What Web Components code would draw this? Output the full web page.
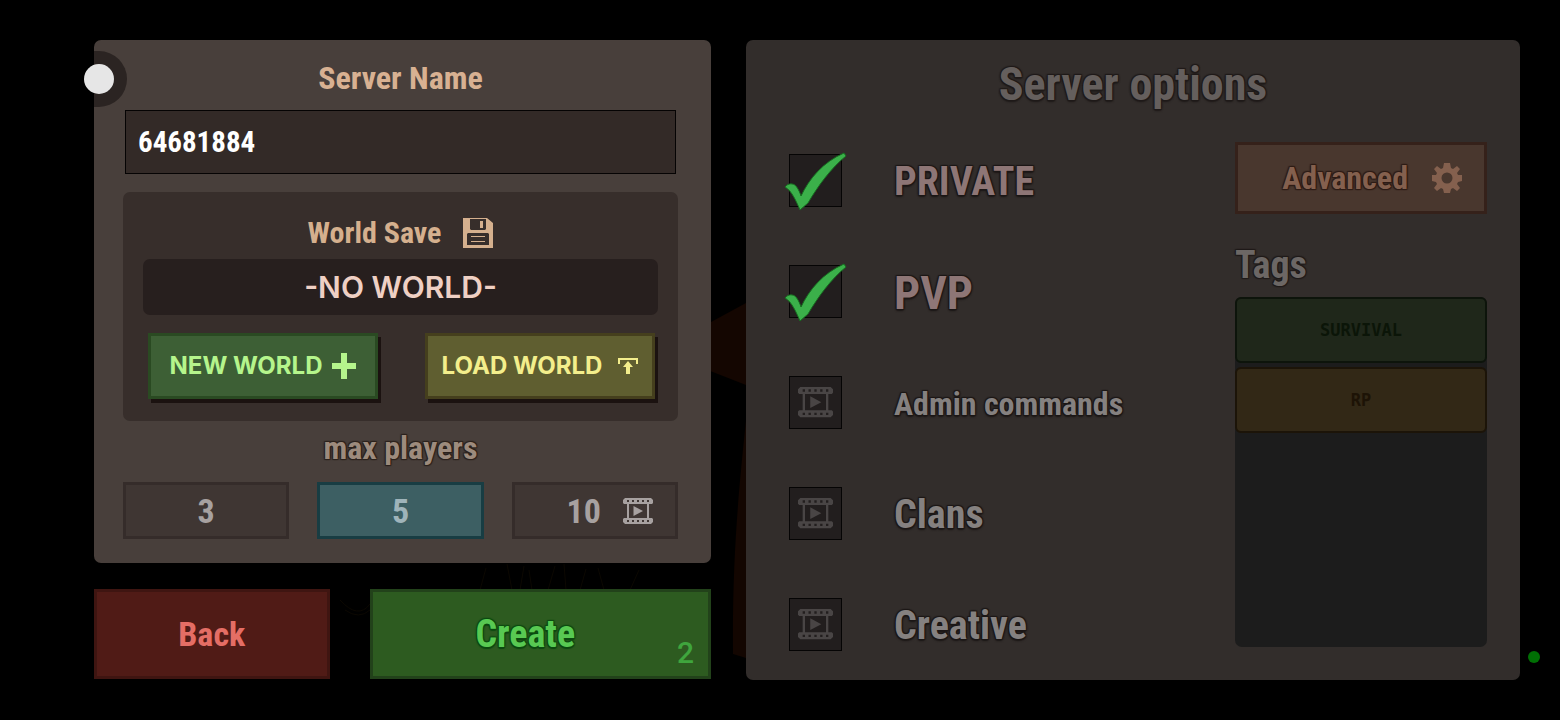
<!DOCTYPE html>
<html lang="en">
<head>
<meta charset="utf-8">
<title>Create server</title>
<style>
  body {
    margin: 0;
    background: #000;
    font-family: "Roboto Condensed", Roboto, sans-serif;
    font-weight: bold;
  }
</style>
</head>
<body>
<server-screen></server-screen>

<script>
const ICONS = {
  film: {
    box: '0 0 30 26',
    body: '<path fill-rule="evenodd" d="M2 0h26l2 2v3l-1 1h-3v14h3l1 1v3l-2 2H2l-2-2v-3l1-1h3V6H1L0 5V2zM6 6v14h18V6zM4 2v2h2V2zM9 2v2h2V2zM14 2v2h2V2zM19 2v2h2V2zM24 2v2h2V2zM4 22v2h2v-2zM9 22v2h2v-2zM14 22v2h2v-2zM19 22v2h2v-2zM24 22v2h2v-2z"/><path d="M10.500 8l9.500 5-9.500 5z"/>'
  },
  save: {
    box: '0 0 30 30',
    body: '<path fill-rule="evenodd" d="M0 0h24l6 5v25H0zM7 1v10l1 1h14l1-1V1zM17 3h3v7h-3zM4 16v11h22V16l-1-1H5z"/><path d="M8 18h14v1H8zM8 23h14v1H8z"/>'
  },
  plus: {
    box: '0 0 24 26',
    body: '<path d="M9 0h6v10h9v6h-9v10H9V16H0v-6h9z"/>'
  },
  upload: {
    box: '0 0 20 16',
    body: '<path d="M0 0h20v6h-2V2H2v4H0z"/><path d="M10 3l5 6h-3v7H8V9H5z"/>'
  },
  gear: {
    box: '0 0 30 30',
    body: '<path fill-rule="evenodd" d="M12 0h6l1 5 2 1 4-3 3 3-3 4 1 2 4 0v6l-4 1-1 2 3 4-3 3-4-3-2 1-1 4h-6l-1-4-2-1-4 3-3-3 3-4-1-2-4-1v-6l4 0 1-2-3-4 3-3 4 3 2-1zM15 9.500a5.500 5.500 0 1 0 0 11 5.500 5.500 0 1 0 0-11z"/>'
  },
  check: {
    box: '0 0 64 60',
    body: '<path stroke="#176d20" stroke-width="1" d="M1 35c3-4 8-4 11-1 3 4 4 7 5 10C25 27 39 10 60 1l2 3C47 16 34 34 24 51l-8 7C12 49 8 39 1 35z"/>'
  }
};

// Single colour icon, takes its colour from the text around it
class GameIcon extends HTMLElement {
  constructor() {
    super();
    this.attachShadow({ mode: 'open' });
  }

  connectedCallback() {
    const icon = ICONS[this.getAttribute('name')];
    this.shadowRoot.innerHTML = `
      <style>
        :host { display: block; flex: none; width: 30px; }
        svg { display: block; width: 100%; fill: currentColor; }
      </style>
      <svg viewBox="${icon.box}" aria-hidden="true">${icon.body}</svg>
    `;
  }
}

// Rounded panel with a heading and free content
class GamePanel extends HTMLElement {
  constructor() {
    super();
    this.attachShadow({ mode: 'open' }).innerHTML = `
      <style>
        :host {
          display: flex;
          flex-direction: column;
          box-sizing: border-box;
          border-radius: 7px;
          background: var(--panel, #483f3b);
        }
      </style>
      <slot></slot>
    `;
  }
}

// Push button. Tones: new, load, back, create, advanced
class GameButton extends HTMLElement {
  constructor() {
    super();
    this.attachShadow({ mode: 'open' }).innerHTML = `
      <style>
        :host {
          display: block;
          --edge: #2a4a22;
          --fill: #3d5f35;
          --ink: #b5f58c;
        }
        button {
          display: flex;
          align-items: center;
          justify-content: center;
          gap: 10px;
          position: relative;
          box-sizing: border-box;
          width: 100%;
          height: var(--height, 66px);
          padding: 0 8px;
          border: 3px solid var(--edge);
          background: var(--fill);
          color: var(--ink);
          font: inherit;
          white-space: nowrap;
          cursor: pointer;
        }
        :host([tone="new"]) button, :host([tone="load"]) button {
          font: bold 24px/32px Inter, sans-serif;
          box-shadow: 3px 4px 0 #1b1210;
        }
        :host([tone="load"]) button { gap: 16px; }
        :host([tone="load"]) { --edge: #453f1d; --fill: #5f5e30; --ink: #f3ee8c; }
        :host([tone="back"]) { --edge: #3f1511; --fill: #501b16; --ink: #e46e65; --height: 90px; font-size: 34px; }
        :host([tone="create"]) { --edge: #22421a; --fill: #2d5b20; --ink: #58c952; --height: 90px; font-size: 38px; }
        :host([tone="create"]) button {
          padding-right: 38px;
          text-shadow: 1px 1px 1px #0c4a10, -1px -1px 1px #0c4a10, 1px -1px 1px #0c4a10, -1px 1px 1px #0c4a10, 0 2px 1px #0c4a10;
        }
        :host([tone="advanced"]) { --edge: #35211a; --fill: #49372e; --ink: #84604e; --height: 72px; font-size: 32px; }
        :host([tone="advanced"]) button {
          justify-content: flex-end;
          gap: 24px;
          padding-right: 22px;
          text-shadow: 1px 1px 1px #2d1b15, -1px -1px 1px #2d1b15, 1px -1px 1px #2d1b15, -1px 1px 1px #2d1b15;
        }
        ::slotted([slot="count"]) {
          position: absolute;
          right: 14px;
          bottom: 7px;
          font: 500 30px/32px Roboto, sans-serif;
          color: #3fa53d;
          text-shadow: none;
        }
      </style>
      <button type="button"><slot></slot><slot name="count"></slot></button>
    `;
  }
}

// Max players choice
class PlayerCount extends HTMLElement {
  constructor() {
    super();
    this.attachShadow({ mode: 'open' });
  }

  connectedCallback() {
    const selected = this.getAttribute('selected');
    const counts = this.getAttribute('counts').split(',');
    const locked = this.getAttribute('locked');

    this.shadowRoot.innerHTML = `
      <style>
        :host { display: block; }
        fieldset {
          display: grid;
          grid-template-columns: repeat(3, 1fr);
          column-gap: 28px;
          min-width: 0;
          margin: 0;
          padding: 0;
          border: 0;
        }
        legend {
          width: 100%;
          margin-bottom: 14px;
          padding: 0;
          text-align: center;
          font-size: 32px;
          line-height: 40px;
          color: #9d8b7d;
          text-shadow: 1px 1px 1px #2b211c, -1px -1px 1px #2b211c, 1px -1px 1px #2b211c, -1px 1px 1px #2b211c;
        }
        label {
          display: flex;
          align-items: center;
          justify-content: center;
          gap: 22px;
          position: relative;
          box-sizing: border-box;
          height: 57px;
          border: 3px solid #352c2a;
          background: #3f3633;
          color: #a7a1a0;
          font-size: 34px;
        }
        label:has(:checked) { border-color: #183d43; background: #3d5f63; color: #9fb4ba; }
        label.locked { justify-content: flex-end; padding-right: 22px; }
        input { position: absolute; inset: 0; margin: 0; opacity: 0; }
      </style>
      <fieldset>
        <legend>max players</legend>
        ${counts.map(n => `
          <label class="${n === locked ? 'locked' : ''}">
            <input type="radio" name="players" value="${n}" ${n === selected ? 'checked' : ''}>
            <span>${n}</span>
            ${n === locked ? '<game-icon name="film"></game-icon>' : ''}
          </label>`).join('')}
      </fieldset>
    `;
  }
}

// One row of the options list: tick box and its label
class OptionRow extends HTMLElement {
  constructor() {
    super();
    this.attachShadow({ mode: 'open' });
  }

  connectedCallback() {
    const on = this.hasAttribute('checked');
    this.shadowRoot.innerHTML = `
      <style>
        :host { display: block; font-size: 40px; color: #858180; }
        :host([checked]) { color: #8e7676; }
        :host([size="small"]) { font-size: 32px; }
        :host([size="large"]) { font-size: 46px; }
        label {
          display: flex;
          align-items: center;
          gap: 52px;
          height: 53px;
          white-space: nowrap;
          text-shadow: 1px 1px 1px #1c1716, -1px -1px 1px #1c1716, 1px -1px 1px #1c1716, -1px 1px 1px #1c1716, 0 2px 2px #1c1716;
        }
        .text { padding-top: 3px; line-height: 52px; }
        .box { display: grid; place-items: center; position: relative; flex: none; width: 53px; height: 53px; }
        input {
          grid-area: 1 / 1;
          appearance: none;
          width: 53px;
          height: 53px;
          margin: 0;
          border: 1px solid #050404;
          background: #221e1e;
        }
        game-icon { pointer-events: none; }
        [name="film"] { grid-area: 1 / 1; width: 35px; color: #494545; position: relative; }
        [name="check"] { position: absolute; left: -5px; top: -2px; width: 64px; color: #3bb04a; }
      </style>
      <label>
        <span class="box">
          <input type="checkbox" ${on ? 'checked' : ''}>
          <game-icon name="${on ? 'check' : 'film'}"></game-icon>
        </span>
        <span class="text"><slot></slot></span>
      </label>
    `;
  }
}

class ServerTag extends HTMLElement {
  constructor() {
    super();
    this.attachShadow({ mode: 'open' }).innerHTML = `
      <style>
        :host { display: block; }
        button {
          display: block;
          box-sizing: border-box;
          width: 100%;
          height: 66px;
          padding: 0;
          border: 2px solid #0d140b;
          border-radius: 6px;
          background: #1f271a;
          color: #0b1508;
          font: bold 17px/20px "DejaVu Sans Mono", monospace;
        }
        :host([tone="amber"]) button { border-color: #1c1408; background: #322816; color: #1d1306; }
      </style>
      <button type="button"><slot></slot></button>
    `;
  }
}

class ServerScreen extends HTMLElement {
  constructor() {
    super();
    this.attachShadow({ mode: 'open' }).innerHTML = `
      <style>
        :host {
          display: grid;
          grid-template-columns: minmax(0, 617fr) minmax(0, 774fr);
          gap: 35px;
          position: relative;
          box-sizing: border-box;
          min-height: 100vh;
          padding: 40px 40px 40px 94px;
        }
        h1, h2, h3, p { margin: 0; font: inherit; }
        .scene { position: absolute; inset: 0; width: 100%; height: 100%; }
        .left { display: flex; flex-direction: column; gap: 26px; position: relative; }
        .setup { padding: 18px 33px 24px 29px; }
        .name { display: block; text-align: center; font-size: 32px; line-height: 40px; color: #d8b192; }
        .setup input {
          box-sizing: border-box;
          height: 64px;
          margin: 12px 2px 18px;
          padding: 0 12px;
          border: 1px solid #050303;
          border-radius: 0;
          outline: 0;
          background: #332a27;
          color: #fff;
          font: inherit;
          font-size: 29px;
        }
        .world { --panel: #372e2b; padding: 21px 20px 22px; }
        .world h2 {
          display: flex;
          align-items: center;
          justify-content: center;
          gap: 22px;
          font-size: 30px;
          line-height: 40px;
          color: #d5b08e;
        }
        .current {
          margin: 6px 0 18px;
          border-radius: 7px;
          background: #271f1e;
          color: #efd0c4;
          text-align: center;
          font: 600 30px/56px Inter, sans-serif;
        }
        .pair { display: grid; grid-template-columns: 1fr 1fr; gap: 47px; margin: 0 3px 0 5px; }
        .pair [name="plus"] { width: 24px; }
        .pair [name="upload"] { width: 20px; }
        player-count { margin-top: 7px; }
        .actions { display: grid; grid-template-columns: 236fr 342fr; gap: 40px; }
        .right { --panel: #322d2b; position: relative; padding: 16px 0 29px; }
        h1 {
          font-size: 46px;
          line-height: 56px;
          text-align: center;
          color: #655f5d;
          text-shadow: 1px 1px 1px #1f1a19, -1px -1px 1px #1f1a19, 1px -1px 1px #1f1a19, -1px 1px 1px #1f1a19, 0 2px 2px #1f1a19;
        }
        .body {
          display: grid;
          grid-template-columns: minmax(0, 446fr) minmax(0, 252fr);
          flex: 1;
          margin-top: 30px;
          padding: 0 33px 0 43px;
        }
        .options { display: flex; flex-direction: column; gap: 58px; padding-top: 12px; }
        aside { display: flex; flex-direction: column; padding-bottom: 4px; }
        h3 {
          margin: 31px 0 12px;
          font-size: 38px;
          line-height: 40px;
          color: #6c6765;
          text-shadow: 1px 1px 1px #1f1a19, -1px -1px 1px #1f1a19, 1px -1px 1px #1f1a19, -1px 1px 1px #1f1a19;
        }
        .tags { display: flex; flex-direction: column; gap: 4px; flex: 1; border-radius: 7px; background: #1c1c1c; }
        .stick, .online { position: absolute; border-radius: 50%; }
        .stick { left: -10px; top: 24px; width: 30px; height: 30px; background: #e6e6e6; }
        .halo { position: absolute; left: 0; top: 11px; width: 33px; height: 56px; border-radius: 0 28px 28px 0; background: #2b2422; }
        .online { right: 20px; bottom: 57px; width: 12px; height: 12px; background: #006f04; }
      </style>

      <svg class="scene" viewBox="0 0 1560 720" preserveAspectRatio="none" aria-hidden="true">
        <path fill="#140601" d="M700 328l46-25v82l-46-18z"/>
        <path fill="#130601" d="M746 420c-6 60-14 130-13 234l13 4z"/>
        <path stroke="#0c0802" fill="none" d="M480 590l6-22M512 590l-5-26M520 590l4-24M532 590l-3-20M548 590l7-24M566 590l-2-26M580 590l6-21M604 590l-6-22M630 590l9-20M340 600q18 20 30 4M345 610q14 10 25 0"/>
      </svg>

      <main class="left">
        <game-panel class="setup">
          <label class="name" for="server-name">Server Name</label>
          <input id="server-name" type="text" value="64681884">
          <game-panel class="world">
            <h2>World Save <game-icon name="save"></game-icon></h2>
            <p class="current">-NO WORLD-</p>
            <div class="pair">
              <game-button tone="new">NEW WORLD<game-icon name="plus"></game-icon></game-button>
              <game-button tone="load">LOAD WORLD<game-icon name="upload"></game-icon></game-button>
            </div>
          </game-panel>
          <player-count counts="3,5,10" selected="5" locked="10"></player-count>
        </game-panel>
        <div class="actions">
          <game-button tone="back">Back</game-button>
          <game-button tone="create">Create<span slot="count">2</span></game-button>
        </div>
        <span class="halo"></span>
        <span class="stick"></span>
      </main>

      <game-panel class="right">
        <h1>Server options</h1>
        <div class="body">
          <div class="options">
            <option-row checked>PRIVATE</option-row>
            <option-row checked size="large">PVP</option-row>
            <option-row size="small">Admin commands</option-row>
            <option-row>Clans</option-row>
            <option-row>Creative</option-row>
          </div>
          <aside>
            <game-button tone="advanced">Advanced<game-icon name="gear"></game-icon></game-button>
            <h3>Tags</h3>
            <div class="tags">
              <server-tag>SURVIVAL</server-tag>
              <server-tag tone="amber">RP</server-tag>
            </div>
          </aside>
        </div>
      </game-panel>
      <span class="online"></span>
    `;
  }
}

customElements.define('game-icon', GameIcon);
customElements.define('game-panel', GamePanel);
customElements.define('game-button', GameButton);
customElements.define('player-count', PlayerCount);
customElements.define('option-row', OptionRow);
customElements.define('server-tag', ServerTag);
customElements.define('server-screen', ServerScreen);
</script>
</body>
</html>
